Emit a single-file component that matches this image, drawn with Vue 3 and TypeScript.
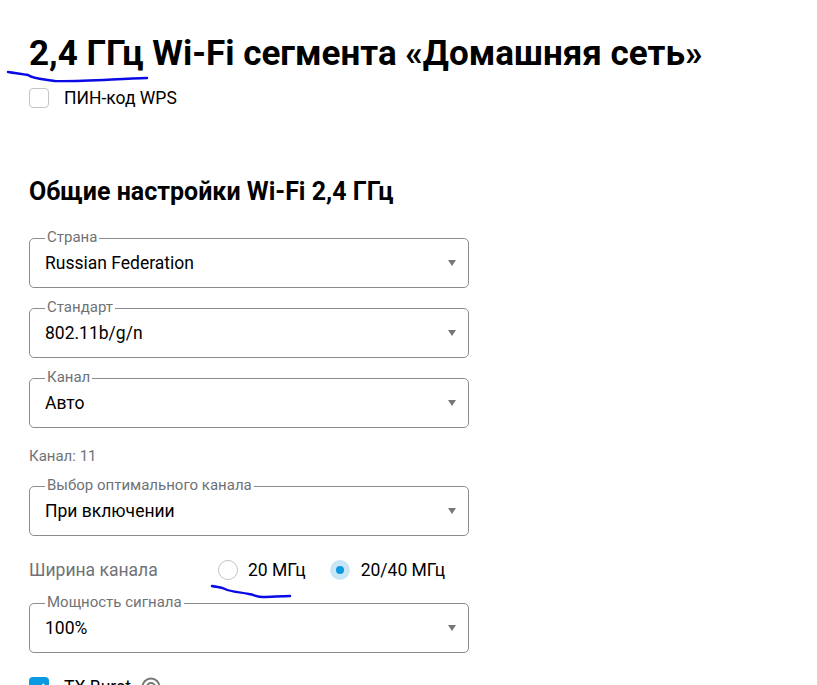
<template>
  <div class="page">
    <h1 class="title">2,4 ГГц Wi-Fi сегмента «Домашняя сеть»</h1>
    <label class="check-row wps">
      <span class="checkbox"></span>
      <span>ПИН-код WPS</span>
    </label>

    <h2 class="subtitle">Общие настройки Wi-Fi 2,4 ГГц</h2>

    <fieldset v-for="field in topFields" :key="field.label" class="select">
      <legend>{{ field.label }}</legend>
      <span>{{ field.value }}</span>
      <i class="arrow"></i>
    </fieldset>

    <div class="hint">Канал: 11</div>

    <fieldset class="select after-hint">
      <legend>Выбор оптимального канала</legend>
      <span>При включении</span>
      <i class="arrow"></i>
    </fieldset>

    <div class="radio-row">
      <span class="radio-label">Ширина канала</span>
      <label class="radio-item first">
        <span class="radio"></span>
        <span>20 МГц</span>
      </label>
      <label class="radio-item second">
        <span class="radio-halo"><span class="radio checked"></span></span>
        <span>20/40 МГц</span>
      </label>
    </div>

    <fieldset class="select power">
      <legend>Мощность сигнала</legend>
      <span>100%</span>
      <i class="arrow"></i>
    </fieldset>

    <label class="check-row burst">
      <span class="checkbox on">
        <svg viewBox="0 0 20 20" width="20" height="20">
          <path d="M5 10.5l3.5 3.5L15 7" fill="none" stroke="#fff" stroke-width="2" />
        </svg>
      </span>
      <span>TX Burst</span>
      <svg class="help" viewBox="0 0 20 20" width="20" height="20">
        <circle cx="10" cy="10" r="8.5" fill="none" stroke="#777" stroke-width="2" />
        <circle cx="10" cy="10" r="4" fill="none" stroke="#777" stroke-width="2" />
      </svg>
    </label>

    <!-- pen marks drawn over the screenshot -->
    <svg class="ink" width="817" height="685" viewBox="0 0 817 685">
      <path d="M8 72c6 1 14 2 20 3c5 4 14 4 27 6c20 1 60 -2 92 -3" />
      <path d="M212 586c4 1 9 1 13 3c6 3 15 3 24 5c6 1 8 3 14 3c8 0 18 -1 27 -1" />
    </svg>
  </div>
</template>

<script setup lang="ts">
const topFields = [
  { label: 'Страна', value: 'Russian Federation' },
  { label: 'Стандарт', value: '802.11b/g/n' },
  { label: 'Канал', value: 'Авто' },
]
</script>

<style scoped>
.page {
  position: relative;
  height: 685px;
  overflow: hidden;
  padding: 33px 0 0 29px;
  box-sizing: border-box;
  font-family: Roboto, "Liberation Sans", sans-serif;
  font-size: 17.5px;
  color: #000;
  background: #fff;
}

.title {
  margin: 0;
  font-size: 35px;
  line-height: 42px;
  font-weight: 700;
}

.check-row {
  display: flex;
  align-items: center;
  height: 20px;
}

.wps {
  margin-top: 13px;
  gap: 15px;
}

.checkbox {
  width: 18px;
  height: 18px;
  border: 1px solid #c4c4c4;
  border-radius: 4px;
  flex: none;
}

.checkbox.on {
  width: 20px;
  height: 20px;
  border: 0;
  background: #0a9ae2;
}

.subtitle {
  margin: 70px 0 0;
  font-size: 25px;
  line-height: 28px;
  font-weight: 700;
}

.select {
  position: relative;
  box-sizing: border-box;
  width: 440px;
  height: 58px;
  margin: 12px 0 0;
  padding: 0 15px;
  border: 1px solid #8a8d90;
  border-radius: 5px;
  line-height: 24px;
}

.subtitle + .select {
  margin-top: 24px;
}

.select legend {
  padding: 0 2px 2px;
  font-size: 15px;
  line-height: 14px;
  color: #6f7276;
}

.select > span {
  display: block;
  margin-top: 5px;
}

.arrow {
  position: absolute;
  right: 12px;
  top: 14px;
  width: 0;
  height: 0;
  border-left: 4px solid transparent;
  border-right: 4px solid transparent;
  border-top: 6px solid #777;
}

.hint {
  margin-top: 19px;
  font-size: 15px;
  line-height: 18px;
  color: #6f7276;
}

.after-hint {
  margin-top: 13px;
}

.radio-row {
  display: flex;
  align-items: center;
  height: 24px;
  margin-top: 22px;
}

.radio-label {
  width: 189px;
  color: #6f7276;
}

.radio-item {
  display: flex;
  align-items: center;
  gap: 10px;
}

.radio-item.first {
  margin-right: 24px;
}

.radio-item.second {
  gap: 11px;
}

.radio {
  box-sizing: border-box;
  display: block;
  width: 20px;
  height: 20px;
  border: 1px solid #c4c4c4;
  border-radius: 50%;
  background: #fff;
}

.radio-halo {
  display: flex;
  align-items: center;
  justify-content: center;
  width: 20px;
  height: 20px;
  border-radius: 50%;
  background: #c9e6f7;
}

.radio.checked {
  width: 8px;
  height: 8px;
  border: 0;
  background: #0a9ae2;
}

.power {
  margin-top: 13px;
}

.burst {
  margin-top: 24px;
  gap: 15px;
}

.help {
  margin-left: -5px;
}

.ink {
  position: absolute;
  left: 0;
  top: 0;
  pointer-events: none;
}

.ink path {
  fill: none;
  stroke: #0a0ae6;
  stroke-width: 2.4;
  stroke-linecap: round;
}
</style>

<style>
html,
body {
  margin: 0;
  overflow: hidden;
}
</style>
